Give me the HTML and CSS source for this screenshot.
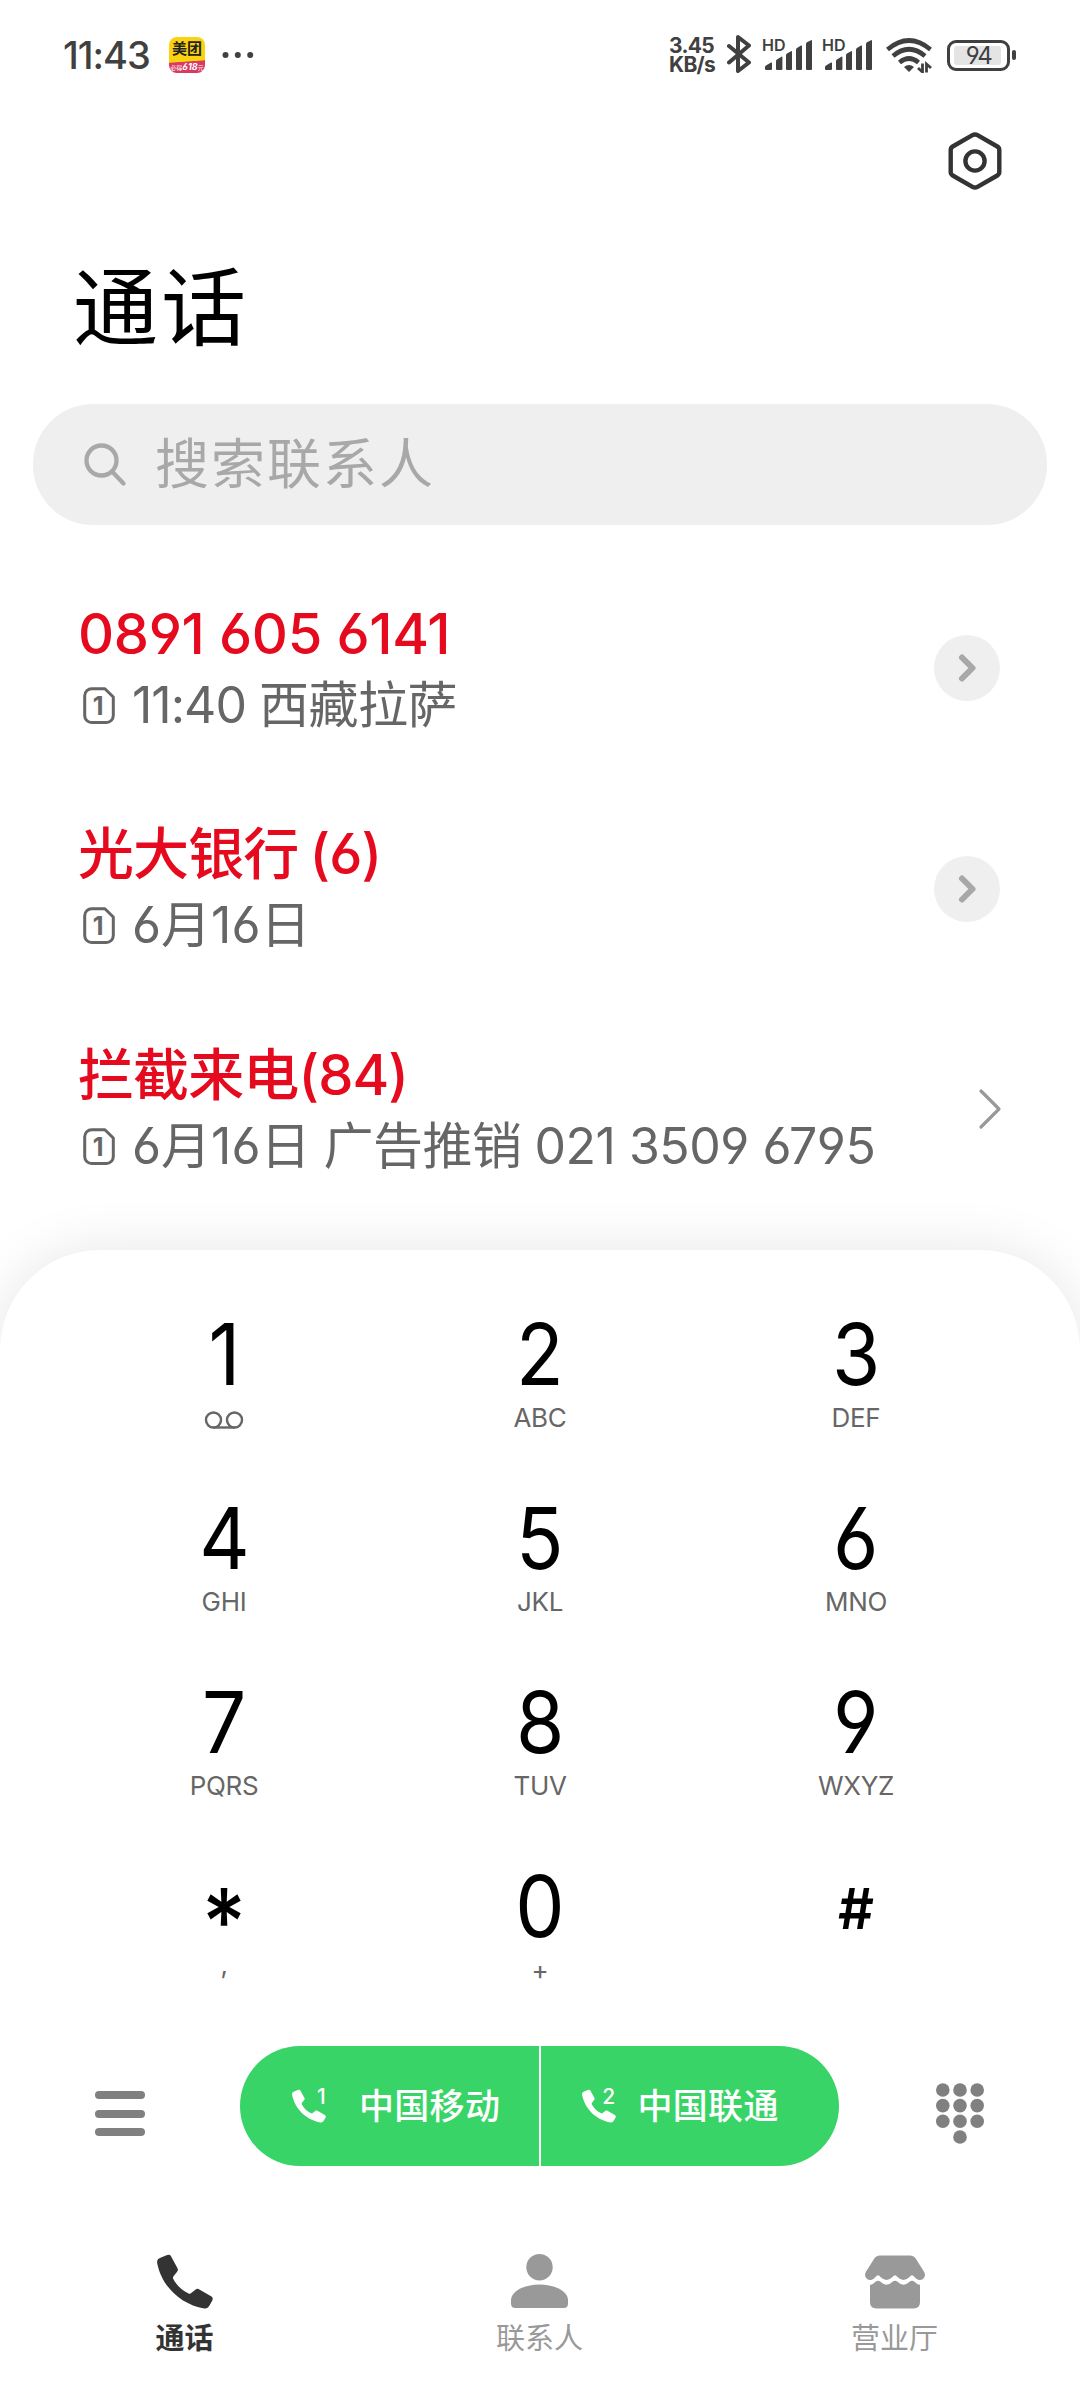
FILE: index.html
```html
<!DOCTYPE html>
<html lang="zh-CN">
<head>
    <meta charset="UTF-8">
    <meta name="viewport" content="width=device-width, initial-scale=1.0">
    <title>通话</title>
    <link rel="stylesheet" href="styles.css">
</head>
<body>
    <svg class="symbols" width="0" height="0">
        <symbol id="sim" viewBox="0 0 32 37">
            <path d="M8.700 1.700h13.200L30.300 10v18.500a7 7 0 0 1-7 7H8.700a7 7 0 0 1-7-7V8.700a7 7 0 0 1 7-7z" fill="none" stroke="#666" stroke-width="3" stroke-linejoin="round"/>
        </symbol>
        <symbol id="handset" viewBox="0 0 56 54">
            <path d="M9.500.8C11.500-.2 13-.1 14 1.700l6.500 12c.6 1.200.5 2.100-.2 3.200l-3.800 4.800c-.7 1-.7 1.700-.2 2.800 3.300 6.300 8.900 11.600 15.300 14.400 1.300.5 2 .3 2.900-.7l4.200-3.300c1-.8 2-.9 3.200-.2l12.200 7.100c1.700 1.100 2 2.300 1.200 4.200L52.500 51c-1.200 2.200-2.700 3.200-5.200 3C22 49.500 4.500 30.500.2 8.700-.2 5.600 1 4.300 3.500 3.300z" fill="currentColor"/>
        </symbol>
        <symbol id="signal" viewBox="0 0 48 30">
            <path d="M0 27q0-1 1-1.600l5-2.800q1-.5 1 .7V29q0 1-1 1H1q-1 0-1-1zM11 21q0-1 .9-1.600l4.500-2.600q1-.6 1 .7V29q0 1-1 1H12q-1 0-1-1zM21 15.200q0-1.100 1-1.700l4-2.300q1-.6 1 .7V29q0 1-1 1h-4q-1 0-1-1zM31 9.500q0-1 1-1.600l4-2.300q1-.6 1 .7V29q0 1-1 1h-4q-1 0-1-1zM41 4q0-1.200 1-1.700L46 .2q1-.5 1 .7V29q0 1-1 1h-4q-1 0-1-1z" fill="currentColor"/>
        </symbol>
    </svg>

    <div class="container">
        <!-- 状态栏 -->
        <div class="status-bar">
            <div class="status-left">
                <span class="clock">11:43</span>
                <div class="app-icon">
                    <span class="app-name">美团</span>
                    <span class="app-promo">必得<b>618</b>元</span>
                </div>
                <svg class="more-dots" width="32" height="8" viewBox="0 0 32 8" fill="#404040">
                    <circle cx="3.500" cy="4" r="3"/><circle cx="15.800" cy="4" r="3"/><circle cx="28.200" cy="4" r="3"/>
                </svg>
            </div>
            <div class="status-right">
                <div class="net-speed"><span>3.45</span><span>KB/s</span></div>
                <svg class="bluetooth" width="24" height="38" viewBox="0 0 24 38" fill="none" stroke="#404040" stroke-width="4" stroke-linecap="round" stroke-linejoin="round">
                    <path d="M2 11l20 16.500L11 36V2l11 8.500L2 27.500"/>
                </svg>
                <div class="sim-signal">
                    <span>HD</span>
                    <svg width="48" height="30"><use href="#signal"/></svg>
                </div>
                <div class="sim-signal">
                    <span>HD</span>
                    <svg width="48" height="30"><use href="#signal"/></svg>
                </div>
                <svg class="wifi" width="46" height="35" viewBox="0 0 46 35" fill="none" stroke="#404040">
                    <path d="M1.500 11.500Q23-6.500 44.500 11.500M7 18Q23 4.500 39 18M13.500 24.500Q23 16.500 32.500 24.500" stroke-width="4.600"/>
                    <path d="M18 29q5-4 10 0l-5 5z" fill="#404040" stroke="none"/>
                    <path d="M36.500 25.500v8.500l-4.500-4M40.500 34.500V26l4.500 4" stroke-width="2.800"/>
                </svg>
                <div class="battery"><div class="battery-level">94</div></div>
                <div class="battery-tip"></div>
            </div>
        </div>

        <!-- 设置按钮 -->
        <div class="toolbar">
            <svg width="54" height="60" viewBox="0 0 54 60" fill="none" stroke="#333" stroke-width="4.400" stroke-linejoin="round">
                <path d="M24.500 4.200q2.500-1.500 5 0l19.800 11.300q2 1.200 2 3.500v22q0 2.300-2 3.500L29.500 55.800q-2.500 1.500-5 0L4.700 44.500q-2-1.200-2-3.500V19q0-2.300 2-3.500z"/>
                <circle cx="27" cy="30" r="9.600"/>
            </svg>
        </div>

        <h1 class="page-title">通话</h1>

        <div class="search-box">
            <svg width="44" height="44" viewBox="0 0 44 44" fill="none" stroke="#a8a8a8" stroke-width="4.300" stroke-linecap="round">
                <circle cx="18.500" cy="17.500" r="15"/>
                <path d="M29.500 29l11 11.500"/>
            </svg>
            <span>搜索联系人</span>
        </div>

        <!-- 通话记录 -->
        <div class="call-list">
            <div class="call-item">
                <div class="call-info">
                    <div class="call-name number">0891 605 6141</div>
                    <div class="call-meta">
                        <span class="sim-badge"><svg width="32" height="37"><use href="#sim"/></svg><b>1</b></span>
                        <span class="time">11:40</span><span>西藏拉萨</span>
                    </div>
                </div>
                <div class="detail-button">
                    <svg width="20" height="32" viewBox="0 0 20 32" fill="none" stroke="#a8a8a8" stroke-width="6" stroke-linecap="round" stroke-linejoin="round"><path d="M5 5.500L15.500 16 5 26.500"/></svg>
                </div>
            </div>
            <div class="call-item">
                <div class="call-info">
                    <div class="call-name">光大银行 (6)</div>
                    <div class="call-meta">
                        <span class="sim-badge"><svg width="32" height="37"><use href="#sim"/></svg><b>1</b></span>
                        <span class="date">6月16日</span>
                    </div>
                </div>
                <div class="detail-button">
                    <svg width="20" height="32" viewBox="0 0 20 32" fill="none" stroke="#a8a8a8" stroke-width="6" stroke-linecap="round" stroke-linejoin="round"><path d="M5 5.500L15.500 16 5 26.500"/></svg>
                </div>
            </div>
            <div class="call-item">
                <div class="call-info">
                    <div class="call-name">拦截来电(84)</div>
                    <div class="call-meta">
                        <span class="sim-badge"><svg width="32" height="37"><use href="#sim"/></svg><b>1</b></span>
                        <span class="date">6月16日</span><span>广告推销</span><span class="meta-number">021 3509 6795</span>
                    </div>
                </div>
                <svg class="arrow" width="24" height="42" viewBox="0 0 24 42" fill="none" stroke="#999" stroke-width="3.200" stroke-linecap="round" stroke-linejoin="round"><path d="M3 3l18 18L3 39"/></svg>
            </div>
        </div>

        <!-- 拨号盘 -->
        <div class="dialer">
            <div class="keypad">
                <div class="key">
                    <span class="digit">1</span>
                    <span class="letters">
                        <svg width="40" height="18" viewBox="0 0 40 18" fill="none" stroke="#666" stroke-width="2.400"><circle cx="9.500" cy="9" r="7.500"/><circle cx="30.500" cy="9" r="7.500"/><path d="M9.500 16.500h21"/></svg>
                    </span>
                </div>
                <div class="key"><span class="digit">2</span><span class="letters">ABC</span></div>
                <div class="key"><span class="digit">3</span><span class="letters">DEF</span></div>
                <div class="key"><span class="digit">4</span><span class="letters">GHI</span></div>
                <div class="key"><span class="digit">5</span><span class="letters">JKL</span></div>
                <div class="key"><span class="digit">6</span><span class="letters">MNO</span></div>
                <div class="key"><span class="digit">7</span><span class="letters">PQRS</span></div>
                <div class="key"><span class="digit">8</span><span class="letters">TUV</span></div>
                <div class="key"><span class="digit">9</span><span class="letters">WXYZ</span></div>
                <div class="key"><span class="digit star">*</span><span class="letters comma">,</span></div>
                <div class="key"><span class="digit">0</span><span class="letters">+</span></div>
                <div class="key"><span class="digit hash">#</span></div>
            </div>

            <div class="dial-actions">
                <div class="menu-icon"><i></i><i></i><i></i></div>
                <div class="call-buttons">
                    <div class="call-button sim1">
                        <span class="call-icon"><svg width="34" height="34"><use href="#handset"/></svg><small>1</small></span>
                        <span>中国移动</span>
                    </div>
                    <div class="call-button sim2">
                        <span class="call-icon"><svg width="34" height="34"><use href="#handset"/></svg><small>2</small></span>
                        <span>中国联通</span>
                    </div>
                </div>
                <svg class="pad-icon" width="48" height="61" viewBox="0 0 48 61" fill="#808080">
                    <circle cx="6.800" cy="7" r="6.800"/><circle cx="24" cy="7" r="6.800"/><circle cx="41.200" cy="7" r="6.800"/>
                    <circle cx="6.800" cy="22.600" r="6.800"/><circle cx="24" cy="22.600" r="6.800"/><circle cx="41.200" cy="22.600" r="6.800"/>
                    <circle cx="6.800" cy="38.300" r="6.800"/><circle cx="24" cy="38.300" r="6.800"/><circle cx="41.200" cy="38.300" r="6.800"/>
                    <circle cx="24" cy="54" r="6.800"/>
                </svg>
            </div>

            <!-- 底部导航 -->
            <div class="tab-bar">
                <div class="tab active">
                    <svg width="56" height="55"><use href="#handset"/></svg>
                    <span>通话</span>
                </div>
                <div class="tab">
                    <svg width="57" height="55" viewBox="0 0 57 55" fill="currentColor"><circle cx="28.500" cy="13.200" r="13.200"/><path d="M0 46c0-9 14-15.500 28.500-15.500S57 37 57 46v3.500q0 4.500-4.500 4.500h-48Q0 54 0 49.500z"/></svg>
                    <span>联系人</span>
                </div>
                <div class="tab">
                    <svg width="60" height="55" viewBox="0 0 60 55" fill="currentColor">
                        <path d="M15 1.500h30q4 0 6 3.500l8.200 13q1.500 3 0 5.500-2 3-5.200 2.500-2 0-4.500-3-2.500-3.500-5 0-6 6-12 0-2.500-3.500-5 0-6 6-12 0-2.500-3.500-5 0-2.500 3-4.500 3-3.200.5-5.200-2.500-1.500-2.500 0-5.500L9 5q2-3.500 6-3.500z"/>
                        <path d="M5 31q3.500-.8 5.500-3.200 2.500-2 5 0 6 6 12 0 2.500-2 5 0 6 6 12 0 2.500-2 5 0 2 2.400 5.500 3.200v17q0 6.500-6.500 6.500h-37Q5 54.500 5 48z"/>
                    </svg>
                    <span>营业厅</span>
                </div>
            </div>
        </div>
    </div>
</body>
</html>
```
FILE: styles.css
```css
* {
    margin: 0;
    padding: 0;
    box-sizing: border-box;
}

body {
    font-family: Inter, 'Noto Sans CJK SC', sans-serif;
    font-feature-settings: 'cv03', 'cv04';
    background: #fff;
    color: #000;
    overflow: hidden;
}

svg {
    display: block;
    flex-shrink: 0;
}

.symbols {
    position: absolute;
}

.container {
    width: 1080px;
    height: 2400px;
    display: flex;
    flex-direction: column;
    overflow: hidden;
}

/* 状态栏 */
.status-bar {
    height: 110px;
    padding: 0 63px;
    display: flex;
    justify-content: space-between;
    align-items: center;
    color: #404040;
}

.status-left,
.status-right {
    display: flex;
    align-items: center;
}

.clock {
    width: 106px;
    font-size: 38px;
    font-weight: 500;
    letter-spacing: -1px;
}

.app-icon {
    width: 36px;
    height: 36px;
    border-radius: 8px;
    overflow: hidden;
    background: linear-gradient(176deg, #fad20f 66%, #d93a63 68%);
    text-align: center;
}

.app-name {
    display: block;
    height: 24px;
    font-size: 15px;
    line-height: 24px;
    font-weight: 700;
    color: #222;
}

.app-promo {
    display: block;
    font-size: 6px;
    line-height: 12px;
    color: #fff;
    white-space: nowrap;
}

.app-promo b {
    font-size: 9px;
    font-style: italic;
}

.more-dots {
    margin-left: 17px;
}

.net-speed {
    width: 58px;
    display: flex;
    flex-direction: column;
    font-size: 21px;
    line-height: 19px;
    font-weight: 700;
    letter-spacing: -0.700px;
}

.bluetooth {
    margin-right: 12px;
    margin-top: -2px;
}

.sim-signal {
    position: relative;
    width: 60px;
    padding-left: 2px;
}

.sim-signal span {
    position: absolute;
    left: -1px;
    top: -3px;
    font-size: 16px;
    line-height: 16px;
    font-weight: 600;
}

.wifi {
    margin-left: 3px;
    margin-right: 15px;
}

.battery {
    width: 63px;
    height: 31px;
    border: 3px solid #404040;
    border-radius: 9px;
    padding: 3px 4px;
}

.battery-level {
    width: 47px;
    height: 19px;
    border-radius: 3px;
    background: #e4e4e4;
    font-size: 24px;
    line-height: 20px;
    letter-spacing: -1.500px;
    padding-left: 2px;
    text-align: center;
}

.battery-tip {
    width: 4px;
    height: 10px;
    margin-left: 2px;
    margin-right: 1px;
    border-radius: 2px;
    background: #404040;
}

.toolbar {
    height: 102px;
    display: flex;
    justify-content: flex-end;
    align-items: center;
    padding-right: 78px;
}

.page-title {
    height: 192px;
    padding-left: 73px;
    font-size: 85px;
    line-height: 194px;
    font-weight: 400;
    letter-spacing: 3px;
}

.search-box {
    height: 121px;
    margin: 0 33px;
    padding-left: 50px;
    border-radius: 60px;
    background: #efefef;
    display: flex;
    align-items: center;
    gap: 28px;
    font-size: 54px;
    line-height: 80px;
    letter-spacing: 2px;
    color: #a8a8a8;
}

/* 通话记录 */
.call-list {
    padding: 33px 80px 0 78px;
    height: 725px;
}

.call-item {
    height: 220.500px;
    display: flex;
    justify-content: space-between;
    align-items: center;
}

.call-info {
    padding-top: 3px;
}

.call-name {
    height: 71px;
    font-size: 56px;
    line-height: 71px;
    font-weight: 500;
    letter-spacing: -0.900px;
    word-spacing: -3px;
    color: #e60a1e;
    white-space: nowrap;
}

.call-name.number {
    letter-spacing: -0.350px;
    word-spacing: 0;
}

.call-meta {
    height: 71px;
    display: flex;
    align-items: center;
    gap: 13px;
    padding-left: 5px;
    font-size: 50px;
    line-height: 71px;
    letter-spacing: -0.500px;
    color: #666;
    white-space: nowrap;
}

.call-meta .time {
    letter-spacing: -1px;
}

.call-meta .date {
    letter-spacing: 0;
}

.sim-badge {
    position: relative;
    margin-right: 4px;
}

.sim-badge b {
    position: absolute;
    left: 0;
    top: 0;
    width: 30px;
    font-size: 25px;
    line-height: 39px;
    text-align: center;
}

.detail-button {
    width: 66px;
    height: 66px;
    border-radius: 50%;
    background: #efefef;
    display: flex;
    justify-content: center;
    align-items: center;
}

.arrow {
    margin-right: -2px;
}

/* 拨号盘 */
.dialer {
    flex: 1;
    position: relative;
    border-radius: 100px 100px 0 0;
    background: #fff;
    box-shadow: 0 0 55px rgba(0, 0, 0, 0.1);
}

.keypad {
    height: 796px;
    padding: 61px 66px 0;
    display: grid;
    grid-template-columns: repeat(3, 316px);
    grid-auto-rows: 184px;
}

.key {
    display: flex;
    flex-direction: column;
    align-items: center;
}

.digit {
    height: 90px;
    font-size: 85px;
    line-height: 88px;
    transform: scaleX(0.92);
}

.letters {
    height: 34px;
    font-size: 26px;
    line-height: 34px;
    letter-spacing: -0.300px;
    color: #666;
}

.letters svg {
    margin-top: 10px;
}

.star {
    font-size: 92px;
    line-height: 118px;
    font-weight: 500;
}

.comma {
    line-height: 24px;
}

.hash {
    font-size: 56px;
    line-height: 93px;
    font-weight: 600;
    transform: none;
}

.dial-actions {
    height: 120px;
    display: flex;
    align-items: center;
}

.menu-icon {
    width: 145px;
    margin-left: 95px;
    padding-top: 15px;
    display: flex;
    flex-direction: column;
    gap: 10.500px;
}

.menu-icon i {
    width: 50px;
    height: 8px;
    border-radius: 4px;
    background: #808080;
}

.call-buttons {
    width: 599px;
    height: 120px;
    display: flex;
    gap: 2px;
    border-radius: 60px;
    overflow: hidden;
}

.call-button {
    width: 298.500px;
    display: flex;
    align-items: center;
    background: #38d468;
    color: #fff;
    font-size: 35px;
    line-height: 50px;
    font-weight: 500;
    letter-spacing: 0.300px;
}

.sim1 {
    padding-left: 52px;
    gap: 33px;
}

.sim2 {
    padding-left: 41px;
    gap: 22px;
}

.call-icon {
    position: relative;
}

.call-icon small {
    position: absolute;
    right: 0;
    top: -3px;
    font-size: 21px;
    line-height: 21px;
}

.pad-icon {
    margin-left: 97px;
    margin-top: 15px;
}

.tab-bar {
    padding: 88px 8px 0 7px;
    display: flex;
}

.tab {
    flex: 1;
    display: flex;
    flex-direction: column;
    align-items: center;
    gap: 9px;
    font-size: 29px;
    line-height: 42px;
    color: #999;
}

.tab.active {
    color: #333;
    font-weight: 700;
}
```
